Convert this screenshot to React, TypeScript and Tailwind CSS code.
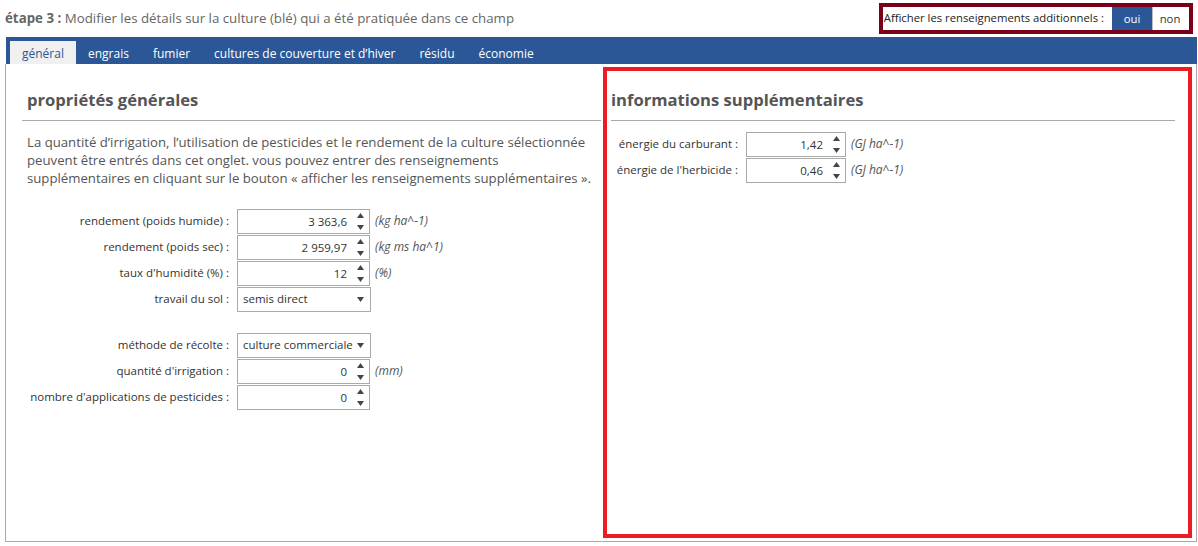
import React from "react";

const tabs = ["général", "engrais", "fumier", "cultures de couverture et d’hiver", "résidu", "économie"];

function Spinner() {
  return (
    <div className="flex flex-col items-center justify-center gap-[7px] w-[10px] mr-[4px]">
      <svg width="7" height="5" viewBox="0 0 7 5"><path d="M3.5 0L7 5H0z" fill="#444" /></svg>
      <svg width="7" height="5" viewBox="0 0 7 5"><path d="M0 0h7L3.5 5z" fill="#444" /></svg>
    </div>
  );
}

function NumberField({ value, width }: { value: string; width: string }) {
  return (
    <div className={`flex h-[25px] border border-[#aaa] bg-white ${width}`}>
      <div className="flex-1 text-right pr-[8px] leading-[23px] text-[#333]">{value}</div>
      <Spinner />
    </div>
  );
}

function SelectField({ value }: { value: string }) {
  return (
    <div className="flex items-center h-[25px] w-[134px] border border-[#aaa] bg-white pl-[5px] pr-[6px]">
      <div className="flex-1 text-[#333] whitespace-nowrap">{value}</div>
      <svg width="7" height="5" viewBox="0 0 7 5"><path d="M0 0h7L3.5 5z" fill="#444" /></svg>
    </div>
  );
}

function Row({ label, children, unit, labelW }: { label: string; children: React.ReactNode; unit?: string; labelW: string }) {
  return (
    <div className="flex items-center h-[26px]">
      <div className={`${labelW} text-right pr-[8px] text-[#333] whitespace-nowrap`}>{label}</div>
      {children}
      {unit && <div className="ml-[5px] italic text-[12px] text-[#555]">{unit}</div>}
    </div>
  );
}

export default function App() {
  return (
    <div className="w-[1198px] h-[546px] bg-white font-['Open_Sans',sans-serif] text-[#555] overflow-hidden">
      <div className="flex items-center justify-between h-[37px] pl-[5px] pr-[5px]">
        <div className="text-[13.3px] text-[#666]">
          <span className="font-bold">étape 3 :</span> Modifier les détails sur la culture (blé) qui a été pratiquée dans ce champ
        </div>
        <div className="flex items-center h-[31px] border-[4px] border-[#7a0019] pl-[1px] pr-[2px] text-[11.3px] text-[#222]">
          <span className="mr-[8px]">Afficher les renseignements additionnels :</span>
          <span className="h-[23px] leading-[23px] w-[40px] text-center bg-[#2b5797] text-white">oui</span>
          <span className="h-[23px] leading-[23px] w-[35px] text-center border-l border-[#bbb] text-[#333]">non</span>
        </div>
      </div>

      <div className="ml-[6px] w-[1191px] h-[27px] bg-[#2b5797] flex items-end pl-[4px]">
        {tabs.map((t, i) => (
          <div
            key={t}
            className={
              i === 0
                ? "h-[23px] px-[12px] pt-[2px] bg-[#f0f0f0] text-[#2b5797] text-[12px] leading-[22px]"
                : "h-[23px] px-[12px] pt-[2px] text-white text-[12px] leading-[22px]"
            }
          >
            {t}
          </div>
        ))}
      </div>

      <div className="ml-[5px] w-[1192px] h-[478px] border-l border-r border-b border-[#aaa] flex text-[11.5px]">
        <div className="w-[597px] shrink-0 pl-[16px] pt-[24px]">
          <h2 className="pl-[5px] text-[16.6px] font-bold text-[#555] leading-[24px]">propriétés générales</h2>
          <div className="mt-[8px] border-t border-[#aaa] w-[579px]" />
          <p className="mt-[12px] pl-[5px] text-[13.2px] leading-[18px] text-[#555] w-[578px]">
            La quantité d’irrigation, l’utilisation de pesticides et le rendement de la culture sélectionnée peuvent être entrés dans cet onglet. vous pouvez entrer des renseignements supplémentaires en cliquant sur le bouton « afficher les renseignements supplémentaires ».
          </p>
          <div className="mt-[21px] flex flex-col">
            <Row label="rendement (poids humide) :" unit="(kg ha^-1)" labelW="w-[215px]">
              <NumberField value="3 363,6" width="w-[133px]" />
            </Row>
            <Row label="rendement (poids sec) :" unit="(kg ms ha^1)" labelW="w-[215px]">
              <NumberField value="2 959,97" width="w-[133px]" />
            </Row>
            <Row label="taux d'humidité (%) :" unit="(%)" labelW="w-[215px]">
              <NumberField value="12" width="w-[133px]" />
            </Row>
            <Row label="travail du sol :" labelW="w-[215px]">
              <SelectField value="semis direct" />
            </Row>
            <div className="h-[20px]" />
            <Row label="méthode de récolte :" labelW="w-[215px]">
              <SelectField value="culture commerciale" />
            </Row>
            <Row label="quantité d'irrigation :" unit="(mm)" labelW="w-[215px]">
              <NumberField value="0" width="w-[133px]" />
            </Row>
            <Row label="nombre d'applications de pesticides :" labelW="w-[215px]">
              <NumberField value="0" width="w-[133px]" />
            </Row>
          </div>
        </div>

        <div className="mt-[3px] mb-[3px] w-[589px] border-[4px] border-[#ed1c24] pl-[4px] pt-[17px] pr-[13px]">
          <h2 className="text-[16.6px] font-bold text-[#555] leading-[24px]">informations supplémentaires</h2>
          <div className="mt-[8px] border-t border-[#aaa]" />
          <div className="mt-[10px] flex flex-col">
            <Row label="énergie du carburant :" unit="(GJ ha^-1)" labelW="w-[135px]">
              <NumberField value="1,42" width="w-[100px]" />
            </Row>
            <Row label="énergie de l'herbicide :" unit="(GJ ha^-1)" labelW="w-[135px]">
              <NumberField value="0,46" width="w-[100px]" />
            </Row>
          </div>
        </div>
      </div>
    </div>
  );
}
